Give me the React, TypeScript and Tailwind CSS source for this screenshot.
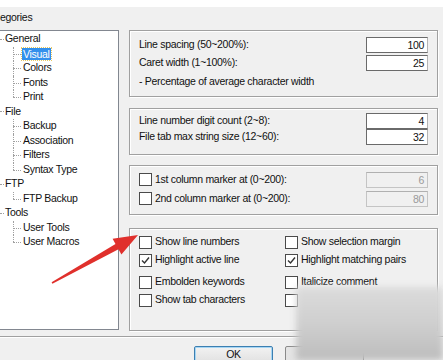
import React from "react";

// one row of the category tree
type Node = { label: string; children?: string[] };

const tree: Node[] = [
  { label: "General", children: ["Visual", "Colors", "Fonts", "Print"] },
  { label: "File", children: ["Backup", "Association", "Filters", "Syntax Type"] },
  { label: "FTP", children: ["FTP Backup"] },
  { label: "Tools", children: ["User Tools", "User Macros"] },
];

const Check = ({ checked = false }: { checked?: boolean }) => (
  <span className="w-[13px] h-[13px] shrink-0 border border-[#4a4a4a] bg-white flex items-center justify-center">
    {checked && (
      <svg width="11" height="11" viewBox="0 0 11 11">
        <polyline points="2,5.5 4.5,8 9,2.5" fill="none" stroke="#333" strokeWidth="1.4" />
      </svg>
    )}
  </span>
);

const CheckItem = ({ label, checked }: { label: string; checked?: boolean }) => (
  <div className="flex items-center gap-[3px] h-[18px]">
    <Check checked={checked} />
    <span>{label}</span>
  </div>
);

const NumBox = ({ value, disabled = false }: { value: string; disabled?: boolean }) => (
  <div
    className={
      disabled
        ? "w-[62px] h-[16px] border border-[#c4c4c4] border-t-[#b0b0b0] bg-[#f0f0f0] text-[#9a9a9a] text-right pr-[3px] leading-[14px]"
        : "w-[62px] h-[16px] border border-[#6a6a6a] border-r-[#b4b4b4] bg-white text-right pr-[3px] leading-[14px]"
    }
  >
    {value}
  </div>
);

const Group = ({ className, children }: { className: string; children: React.ReactNode }) => (
  <div
    className={
      "border border-[#a0a0a0] shadow-[inset_1px_1px_0_#fff,1px_1px_0_#fff] pl-[9px] pr-[9px] flex flex-col " +
      className
    }
  >
    {children}
  </div>
);

export default function App() {
  return (
    <div
      className="relative w-[443px] h-[360px] overflow-hidden bg-[#f0f0f0] text-[#111] text-[10.5px] tracking-[-0.3px]"
      style={{ fontFamily: '"Liberation Sans", Arial, sans-serif' }}
    >
      <div className="h-[7px] bg-white" />
      <div className="flex">
        {/* categories */}
        <div className="w-[119px] flex flex-col">
          <div className="h-[23px] flex items-end pb-[4px]">egories</div>
          <div className="h-[300px] bg-white border-t border-r border-b border-[#828790] pt-[1px]">
            {tree.map((n) => (
              <div key={n.label}>
                <div className="flex items-center h-[14.5px]">
                  <span className="w-[4px] border-t border-dotted border-[#a0a0a0]" />
                  <span className="ml-[1px]">{n.label}</span>
                </div>
                {n.children?.map((c, i) => {
                  const last = i === n.children!.length - 1;
                  return (
                    <div key={c} className="flex items-center h-[14.5px]">
                      <div className="w-[13px]" />
                      <div className="relative w-[8px] self-stretch">
                        <span
                          className={
                            "absolute left-0 top-0 border-l border-dotted border-[#a0a0a0] " +
                            (last ? "h-1/2" : "h-full")
                          }
                        />
                        <span className="absolute left-0 right-0 top-1/2 border-t border-dotted border-[#a0a0a0]" />
                      </div>
                      {c === "Visual" ? (
                        <span className="ml-[1px] px-[1px] bg-[#3390ec] text-white outline outline-1 outline-dotted outline-[#e8c860] leading-[12px]">
                          {c}
                        </span>
                      ) : (
                        <span className="ml-[2px]">{c}</span>
                      )}
                    </div>
                  );
                })}
              </div>
            ))}
          </div>
        </div>

        {/* settings */}
        <div className="ml-[10px] w-[309px] pt-[23px] flex flex-col">
          <Group className="h-[67px] pt-[5px]">
            <div className="flex items-center justify-between h-[18px]">
              <span>Line spacing (50~200%):</span>
              <NumBox value="100" />
            </div>
            <div className="flex items-center justify-between h-[18px]">
              <span>Caret width (1~100%):</span>
              <NumBox value="25" />
            </div>
            <div className="h-[16px] flex items-center mt-[2px]">- Percentage of average character width</div>
          </Group>

          <Group className="h-[47px] mt-[11px] pt-[4px]">
            <div className="flex items-center justify-between h-[16px]">
              <span>Line number digit count (2~8):</span>
              <NumBox value="4" />
            </div>
            <div className="flex items-center justify-between h-[16px]">
              <span>File tab max string size (12~60):</span>
              <NumBox value="32" />
            </div>
          </Group>

          <Group className="h-[50px] mt-[10px] pt-[4px]">
            <div className="flex items-center justify-between h-[19px]">
              <CheckItem label="1st column marker at (0~200):" />
              <NumBox value="6" disabled />
            </div>
            <div className="flex items-center justify-between h-[19px]">
              <CheckItem label="2nd column marker at (0~200):" />
              <NumBox value="80" disabled />
            </div>
          </Group>

          <Group className="h-[103px] mt-[13px] pt-[4px]">
            <div className="grid grid-cols-[146px_1fr]">
              <CheckItem label="Show line numbers" />
              <CheckItem label="Show selection margin" />
              <CheckItem label="Highlight active line" checked />
              <CheckItem label="Highlight matching pairs" checked />
            </div>
            <div className="grid grid-cols-[146px_1fr] mt-[4px]">
              <CheckItem label="Embolden keywords" />
              <CheckItem label="Italicize comment" />
              <CheckItem label="Show tab characters" />
              <CheckItem label="" />
            </div>
          </Group>
        </div>
      </div>

      <div className="mt-[5px] border-t border-[#a0a0a0] border-b border-b-white" />

      <div className="flex pl-[194px] mt-[8px] gap-[12px]">
        <div className="w-[79px] h-[22px] border border-[#3c7fb1] shadow-[inset_0_0_0_1px_#a6d6f4] rounded-[2px] bg-gradient-to-b from-[#f2f2f2] to-[#dcdcdc] flex justify-center leading-[12px] pt-[1px]">
          OK
        </div>
        <div className="w-[79px] h-[22px] border border-[#8a8a8a] rounded-[2px] bg-[#e4e4e4]" />
      </div>

      {/* blurred watermark */}
      <div className="absolute left-[296px] top-[287px] right-0 bottom-0 bg-gradient-to-b from-[#dcdcdc] via-[#cfcfcf] to-[#bdbdbd] blur-[3px]" />

      {/* red arrow */}
      <svg className="absolute left-0 top-0 pointer-events-none" width="443" height="360">
        <polygon
          points="51.6,282.3 115.5,244.0 112.6,238.7 138,235 121.4,254.5 118.5,249.2 52.4,283.7"
          fill="#e0302c"
        />
      </svg>
    </div>
  );
}
